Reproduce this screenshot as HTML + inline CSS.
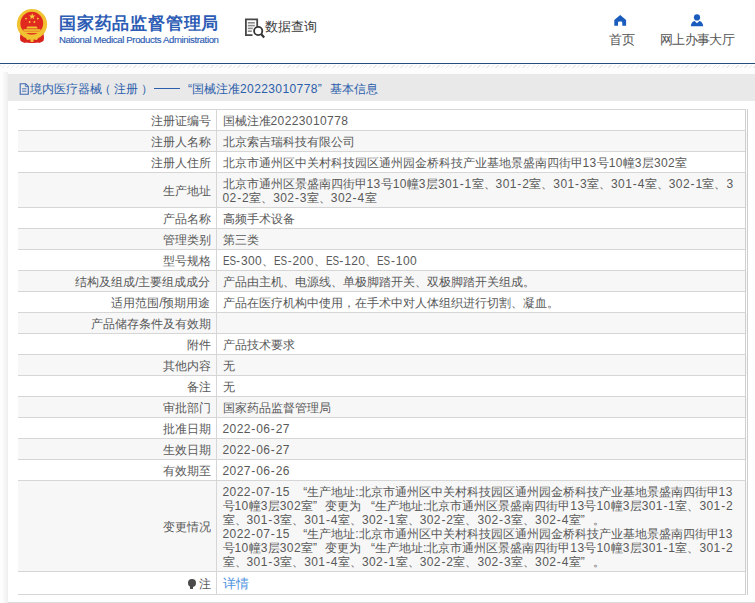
<!DOCTYPE html>
<html><head><meta charset="utf-8">
<style>
*{margin:0;padding:0;box-sizing:border-box;}
html,body{width:755px;height:603px;overflow:hidden;background:#fff;font-family:"Liberation Sans",sans-serif;}
.a{position:absolute;white-space:nowrap;}
#line{position:absolute;left:0;top:63px;width:755px;height:1px;background:#264f7d;}
#bg{position:absolute;left:0;top:64px;width:755px;height:539px;background:#fdfdfd;}
#hatch{position:absolute;left:0;top:65px;width:755px;height:3px;
 background:repeating-linear-gradient(135deg,#e6e6e6 0 1px,#fdfdfd 1px 3.2px);opacity:.8;}
#shadow{position:absolute;left:3px;top:72px;width:5px;height:531px;background:linear-gradient(90deg,#fafafa,#eeeeee);}
.t1{left:59px;top:13.5px;font-size:17px;line-height:20px;font-weight:bold;color:#2d5cb5;letter-spacing:0.8px;}
.t2{left:59px;top:35px;font-size:9.6px;line-height:10px;color:#2d5cb3;-webkit-text-stroke:0.15px #2d5cb3;letter-spacing:-0.37px;}
.q{left:265px;top:19px;font-size:13.2px;line-height:16px;color:#3a3a3a;}
.nav{top:32.5px;font-size:12.5px;line-height:14px;color:#555;}
#panel{position:absolute;left:8px;top:74px;width:747px;height:528px;background:#fff;}
#ph{position:absolute;left:8px;top:74px;width:747px;height:27px;background:#e9e9e9;}
.pt{top:82px;font-size:12px;line-height:14px;color:#2b5eab;}
#bottomline{position:absolute;left:8px;top:602px;width:755px;height:1px;background:#dcdcdc;}
table{position:absolute;left:18px;top:109px;width:730px;border-collapse:collapse;border-right:3px double #cfcfcf;}
td{font-size:12px;line-height:14px;padding:4px 7px 2px 6px;color:#595959;border-top:1px solid #d6d6d6;border-bottom:1px solid #d6d6d6;white-space:nowrap;vertical-align:middle;}
td.l{width:198px;text-align:right;padding-right:5px;border-right:1px solid #d6d6d6;}
tr:nth-child(even) td{background:#f7f7f7;}
.d{letter-spacing:0.4px;}
.h{letter-spacing:0.9px;margin-left:0.5px;}
.u{display:inline-block;width:13px;transform:scaleX(.82);transform-origin:0 0;}
tr.last td{padding-top:5px;padding-bottom:3px;}
.lq{display:inline-block;width:14px;text-align:right;}
.rq{display:inline-block;width:12px;text-align:left;}
.link{color:#4f93e0;font-size:13px;}
.bulb{display:inline-block;width:8px;height:10px;position:relative;margin-right:3px;vertical-align:-1px;}
.bulb:before{content:"";position:absolute;left:0;top:0;width:8px;height:8px;border-radius:50%;background:#4a4a4a;}
.bulb:after{content:"";position:absolute;left:2.5px;top:7px;width:3px;height:3px;background:#4a4a4a;}
</style></head><body>
<div id="bg"></div>
<div id="hatch"></div>
<div id="line"></div>
<!-- emblem -->
<svg style="position:absolute;left:12px;top:5px" width="40" height="42" viewBox="0 0 40 42">
 <path d="M8.5 27 L13 31 Q20 36 27 31 L31.5 27 L31.5 36 Q26 38.5 20 38 Q14 38.5 8.5 36Z" fill="#d8251d"/>
 <circle cx="20" cy="19.2" r="15.1" fill="#f1c232"/>
 <circle cx="19.8" cy="18.2" r="11.4" fill="#e12a1f"/>
 <path d="M8.5 29 Q9 34 14 36 L13 38 Q8.5 37 8 33Z" fill="#d8251d"/>
 <path d="M31.5 29 Q31 34 26 36 L27 38 Q31.5 37 32 33Z" fill="#d8251d"/>
 <polygon points="20.2,8.2 21,10.5 23.4,10.5 21.5,11.9 22.2,14.2 20.2,12.8 18.2,14.2 18.9,11.9 17,10.5 19.4,10.5" fill="#f5d040"/>
 <circle cx="14" cy="13.6" r="0.9" fill="#f5d040"/>
 <circle cx="25.8" cy="13.6" r="0.9" fill="#f5d040"/>
 <circle cx="17.6" cy="17" r="0.9" fill="#f5d040"/>
 <circle cx="22.4" cy="17" r="0.9" fill="#f5d040"/>
 <path d="M15.5 21.6 H24.5 L25.8 23.6 H14.2Z" fill="#f1c232"/>
 <rect x="11.5" y="24.2" width="17" height="1.7" fill="#f1c232"/>
 <rect x="10.8" y="26.3" width="18.4" height="1.8" fill="#f1c232"/>
 <path d="M14 33 Q20 31 26 33 L25 35 Q20 33.5 15 35Z" fill="#f1c232"/>
 <rect x="18.5" y="34" width="3" height="3" fill="#f1c232"/>
</svg>
<div class="a t1">国家药品监督管理局</div>
<div class="a t2">National Medical Products Administration</div>
<!-- data query icon -->
<svg style="position:absolute;left:244px;top:18px" width="22" height="22" viewBox="0 0 22 22">
 <path d="M13.2 8.5 V1.4 H1.9 V17.2 H8.5" fill="none" stroke="#474747" stroke-width="1.8"/>
 <rect x="3.8" y="4" width="7" height="1.6" fill="#8a8a8a"/>
 <rect x="3.8" y="6.8" width="7" height="1.6" fill="#8a8a8a"/>
 <rect x="3.8" y="9.6" width="5" height="1.6" fill="#8a8a8a"/>
 <rect x="3.8" y="12.4" width="4" height="1.6" fill="#8a8a8a"/>
 <circle cx="14.2" cy="13" r="4.1" fill="none" stroke="#333" stroke-width="1.8"/>
 <line x1="17.1" y1="16" x2="20.2" y2="19.4" stroke="#333" stroke-width="2.2"/>
</svg>
<div class="a q">数据查询</div>
<!-- nav -->
<svg style="position:absolute;left:613px;top:14px" width="14" height="12" viewBox="0 0 14 12">
 <path d="M7.2 1 L13.1 6 V11.8 H9.3 V8.8 Q9.3 7.6 8.1 7.6 H6.2 Q5 7.6 5 8.8 V11.8 H1.3 V6Z" fill="#1a5cbd"/>
</svg>
<div class="a nav" style="left:609px">首页</div>
<svg style="position:absolute;left:690px;top:13px" width="14" height="14" viewBox="0 0 14 14">
 <circle cx="7" cy="4.4" r="3.1" fill="#1a5cbd"/>
 <path d="M0.8 13.2 Q1.2 8.8 4.6 8 L7 10.2 L9.4 8 Q12.8 8.8 13.2 13.2Z" fill="#1a5cbd"/>
</svg>
<div class="a nav" style="left:660px;letter-spacing:-0.7px">网上办事大厅</div>

<div id="shadow"></div>
<div id="panel"></div>
<div id="ph"></div>
<svg style="position:absolute;left:19px;top:83px" width="11" height="12" viewBox="0 0 11 12">
 <path d="M1.2 0.7 H6.6 L9.3 3.4 V11.2 H1.2Z" fill="none" stroke="#3d68b2" stroke-width="1.1"/>
 <path d="M6.4 0.9 V3.6 H9.1" fill="none" stroke="#3d68b2" stroke-width="0.8"/>
 <line x1="3" y1="5.8" x2="7.4" y2="5.8" stroke="#3d68b2" stroke-width="0.9"/>
 <line x1="3" y1="8.2" x2="7.4" y2="8.2" stroke="#3d68b2" stroke-width="0.9"/>
</svg>
<div class="a pt" style="left:30px">境内医疗器械<span style="position:relative;left:-3px">（</span>注册<span style="position:relative;left:3px">）</span></div>
<div style="position:absolute;left:154px;top:88px;width:26px;height:1px;background:#2b5eab"></div>
<div class="a pt" style="left:180px"><span class="lq" style="width:12px">“</span>国械注准<span class="d">20223010778</span><span class="rq">”</span>基本信息</div>
<div id="bottomline"></div>
<table>
<tr><td class="l">注册证编号</td><td class="v">国械注准<span class="d">20223010778</span></td></tr>
<tr><td class="l">注册人名称</td><td class="v">北京索吉瑞科技有限公司</td></tr>
<tr><td class="l">注册人住所</td><td class="v">北京市通州区中关村科技园区通州园金桥科技产业基地景盛南四街甲<span class="d">13</span>号<span class="d">10</span>幢<span class="d">3</span>层<span class="d">302</span>室</td></tr>
<tr><td class="l">生产地址</td><td class="v">北京市通州区景盛南四街甲<span class="d">13</span>号<span class="d">10</span>幢<span class="d">3</span>层<span class="d">301</span><span class="h">-</span><span class="d">1</span>室、<span class="d">301</span><span class="h">-</span><span class="d">2</span>室、<span class="d">301</span><span class="h">-</span><span class="d">3</span>室、<span class="d">301</span><span class="h">-</span><span class="d">4</span>室、<span class="d">302</span><span class="h">-</span><span class="d">1</span>室、<span class="d">3</span><br><span class="d">02</span><span class="h">-</span><span class="d">2</span>室、<span class="d">302</span><span class="h">-</span><span class="d">3</span>室、<span class="d">302</span><span class="h">-</span><span class="d">4</span>室</td></tr>
<tr><td class="l">产品名称</td><td class="v">高频手术设备</td></tr>
<tr><td class="l">管理类别</td><td class="v">第三类</td></tr>
<tr><td class="l">型号规格</td><td class="v"><span class="u">ES</span><span class="h">-</span><span class="d">300</span>、<span class="u">ES</span><span class="h">-</span><span class="d">200</span>、<span class="u">ES</span><span class="h">-</span><span class="d">120</span>、<span class="u">ES</span><span class="h">-</span><span class="d">100</span></td></tr>
<tr><td class="l">结构及组成/主要组成成分</td><td class="v">产品由主机、电源线、单极脚踏开关、双极脚踏开关组成。</td></tr>
<tr><td class="l">适用范围/预期用途</td><td class="v">产品在医疗机构中使用，在手术中对人体组织进行切割、凝血。</td></tr>
<tr><td class="l">产品储存条件及有效期</td><td class="v"></td></tr>
<tr><td class="l">附件</td><td class="v">产品技术要求</td></tr>
<tr><td class="l">其他内容</td><td class="v">无</td></tr>
<tr><td class="l">备注</td><td class="v">无</td></tr>
<tr><td class="l">审批部门</td><td class="v">国家药品监督管理局</td></tr>
<tr><td class="l">批准日期</td><td class="v"><span class="d">2022</span><span class="h">-</span><span class="d">06</span><span class="h">-</span><span class="d">27</span></td></tr>
<tr><td class="l">生效日期</td><td class="v"><span class="d">2022</span><span class="h">-</span><span class="d">06</span><span class="h">-</span><span class="d">27</span></td></tr>
<tr><td class="l">有效期至</td><td class="v"><span class="d">2027</span><span class="h">-</span><span class="d">06</span><span class="h">-</span><span class="d">26</span></td></tr>
<tr><td class="l">变更情况</td><td class="v"><span class="d">2022</span><span class="h">-</span><span class="d">07</span><span class="h">-</span><span class="d">15</span><span class="sp"> </span><span class="lq">“</span>生产地址<span class="c">:</span>北京市通州区中关村科技园区通州园金桥科技产业基地景盛南四街甲<span class="d">13</span><br>号<span class="d">10</span>幢<span class="d">3</span>层<span class="d">302</span>室<span class="rq">”</span>变更为<span class="lq">“</span>生产地址<span class="c">:</span>北京市通州区景盛南四街甲<span class="d">13</span>号<span class="d">10</span>幢<span class="d">3</span>层<span class="d">301</span><span class="h">-</span><span class="d">1</span>室、<span class="d">301</span><span class="h">-</span><span class="d">2</span><br>室、<span class="d">301</span><span class="h">-</span><span class="d">3</span>室、<span class="d">301</span><span class="h">-</span><span class="d">4</span>室、<span class="d">302</span><span class="h">-</span><span class="d">1</span>室、<span class="d">302</span><span class="h">-</span><span class="d">2</span>室、<span class="d">302</span><span class="h">-</span><span class="d">3</span>室、<span class="d">302</span><span class="h">-</span><span class="d">4</span>室<span class="rq">”</span>。<br><span class="d">2022</span><span class="h">-</span><span class="d">07</span><span class="h">-</span><span class="d">15</span><span class="sp"> </span><span class="lq">“</span>生产地址<span class="c">:</span>北京市通州区中关村科技园区通州园金桥科技产业基地景盛南四街甲<span class="d">13</span><br>号<span class="d">10</span>幢<span class="d">3</span>层<span class="d">302</span>室<span class="rq">”</span>变更为<span class="lq">“</span>生产地址<span class="c">:</span>北京市通州区景盛南四街甲<span class="d">13</span>号<span class="d">10</span>幢<span class="d">3</span>层<span class="d">301</span><span class="h">-</span><span class="d">1</span>室、<span class="d">301</span><span class="h">-</span><span class="d">2</span><br>室、<span class="d">301</span><span class="h">-</span><span class="d">3</span>室、<span class="d">301</span><span class="h">-</span><span class="d">4</span>室、<span class="d">302</span><span class="h">-</span><span class="d">1</span>室、<span class="d">302</span><span class="h">-</span><span class="d">2</span>室、<span class="d">302</span><span class="h">-</span><span class="d">3</span>室、<span class="d">302</span><span class="h">-</span><span class="d">4</span>室<span class="rq">”</span>。</td></tr>
<tr class="last"><td class="l"><span class="bulb"></span>注</td><td class="v"><span class="link">详情</span></td></tr>
</table>
</body></html>
